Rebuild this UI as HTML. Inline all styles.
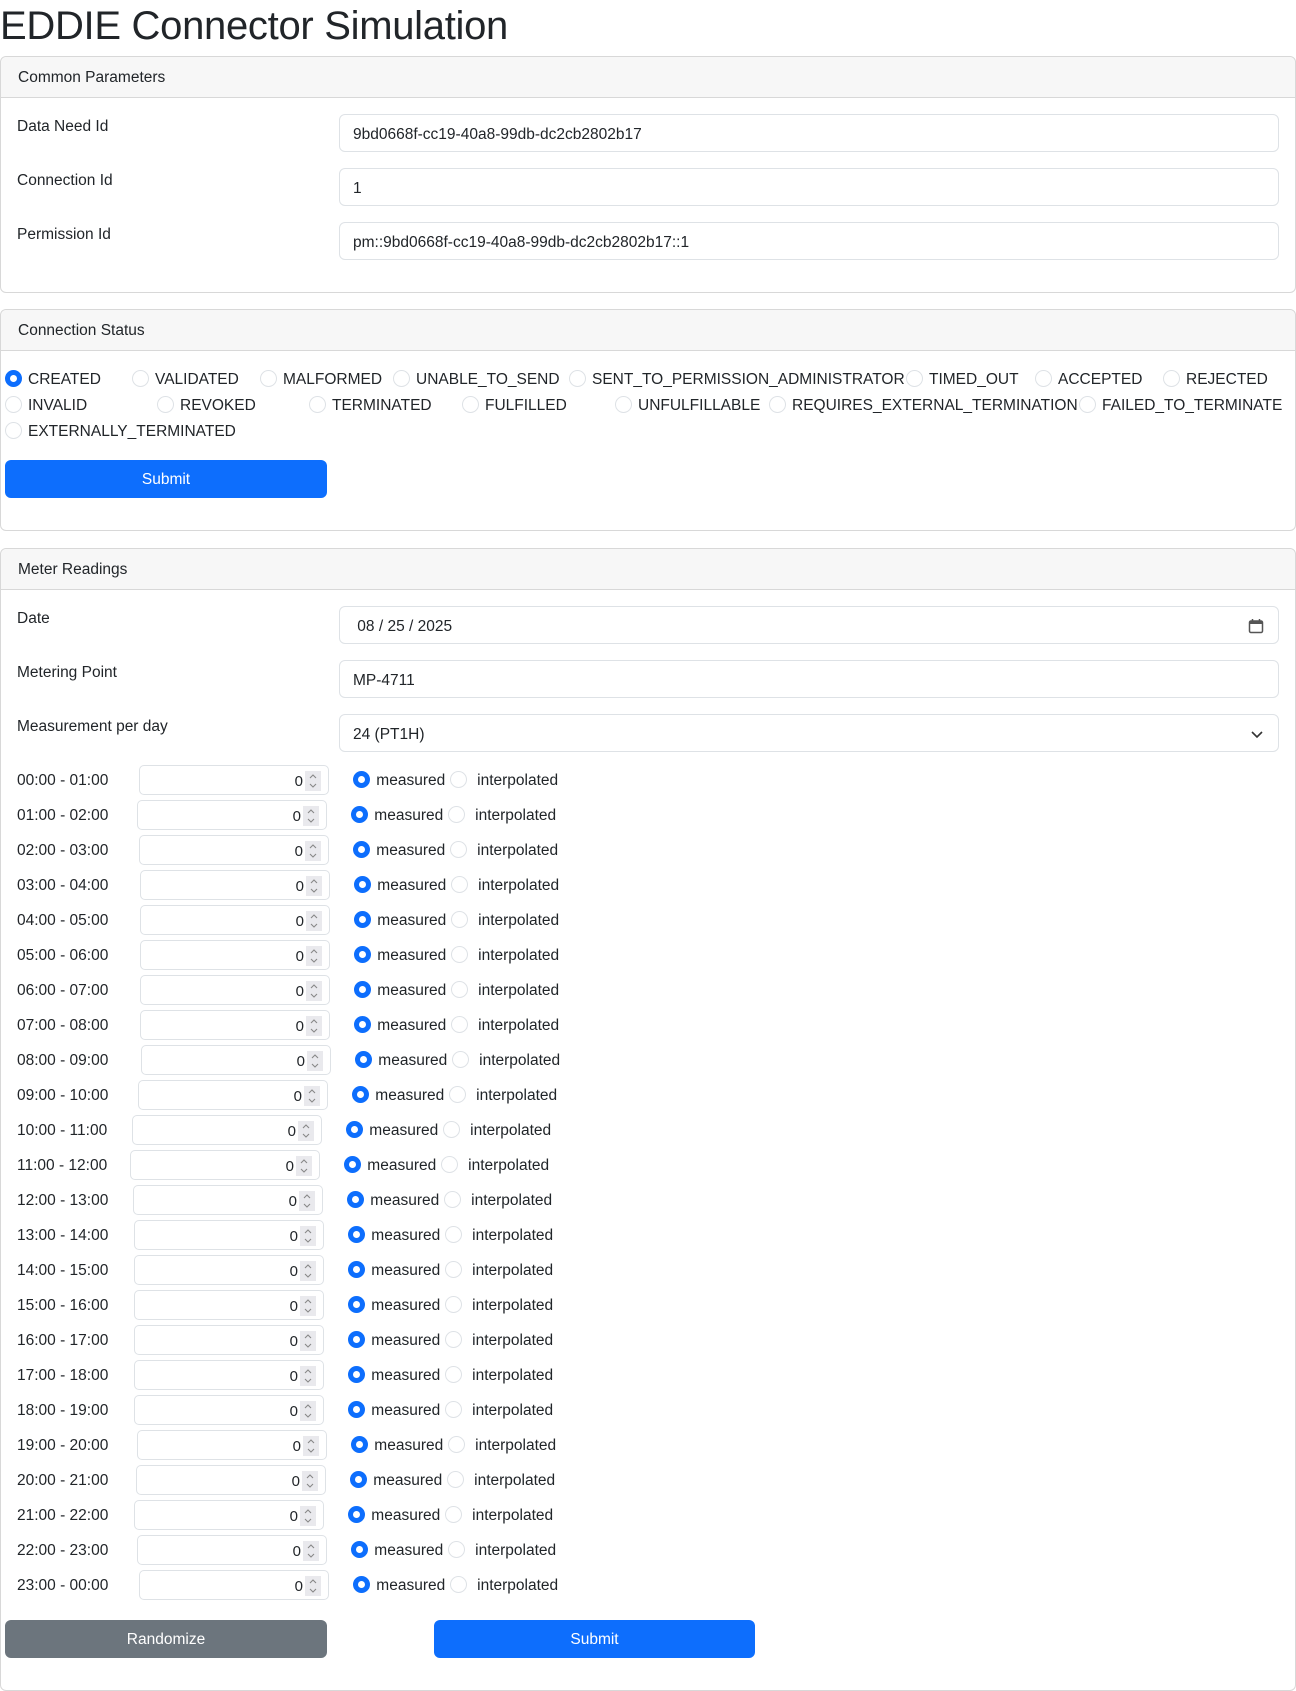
<!DOCTYPE html>
<html><head><meta charset="utf-8"><style>
*{box-sizing:border-box}
body{margin:0;width:1296px;height:1691px;font-family:"Liberation Sans",sans-serif;color:#212529;font-size:16px;position:relative;overflow:hidden;background:#fff}
.abs{position:absolute;white-space:nowrap}
h1{position:absolute;left:0;top:1px;margin:0;font-weight:400;font-size:40px;line-height:50px;letter-spacing:-0.3px}
.card{position:absolute;left:0;width:1296px;border:1px solid #d8d8d8;border-radius:6px}
.ch{height:41px;background:#f7f7f7;border-bottom:1px solid #d8d8d8;padding:0 17px;line-height:42px;font-size:15.5px;border-radius:6px 6px 0 0}
.inp{position:absolute;left:339px;width:940px;height:38px;border:1px solid #dee2e6;border-radius:6px;padding:0 13px;line-height:39px;font-size:15.5px}
.lbl{position:absolute;left:17px;font-size:15.5px}
.r{display:inline-block;width:17px;height:17px;border:1px solid #dee2e6;border-radius:50%;vertical-align:-3px;background:#fff}
.r.on{border:5px solid #0d6efd}
.btn{position:absolute;height:38px;border-radius:6px;color:#fff;text-align:center;line-height:39px;font-size:15.5px}
.row{position:absolute;left:0;width:700px;height:30px}
.row .l{position:absolute;left:17px;top:7px;font-size:15.5px}
.row .n{position:absolute;top:0;width:190px;height:30px;border:1px solid #dee2e6;border-radius:5px}
.row .n span{position:absolute;right:25px;top:7px;font-size:15px}
.row .n svg{position:absolute;right:7px;top:5px;background:#e9e9ed}
.row .m{position:absolute;top:6px;font-size:15.5px;white-space:nowrap}
.row .m .r{margin-right:2px}
.st{position:absolute;font-size:15.5px;white-space:nowrap}
.st .r{margin-right:6px}
</style></head><body>
<h1>EDDIE Connector Simulation</h1>

<div class="card" style="top:56px;height:237px">
<div class="ch">Common Parameters</div>
</div>
<div class="lbl" style="top:118px">Data Need Id</div>
<div class="inp" style="top:114px">9bd0668f-cc19-40a8-99db-dc2cb2802b17</div>
<div class="lbl" style="top:172px">Connection Id</div>
<div class="inp" style="top:168px">1</div>
<div class="lbl" style="top:226px">Permission Id</div>
<div class="inp" style="top:222px">pm::9bd0668f-cc19-40a8-99db-dc2cb2802b17::1</div>

<div class="card" style="top:309px;height:222px">
<div class="ch">Connection Status</div>
</div>
<div class="st" style="left:5px;top:370px"><span class="r on"></span>CREATED</div>
<div class="st" style="left:132px;top:370px"><span class="r"></span>VALIDATED</div>
<div class="st" style="left:260px;top:370px"><span class="r"></span>MALFORMED</div>
<div class="st" style="left:393px;top:370px"><span class="r"></span>UNABLE_TO_SEND</div>
<div class="st" style="left:569px;top:370px"><span class="r"></span>SENT_TO_PERMISSION_ADMINISTRATOR</div>
<div class="st" style="left:906px;top:370px"><span class="r"></span>TIMED_OUT</div>
<div class="st" style="left:1035px;top:370px"><span class="r"></span>ACCEPTED</div>
<div class="st" style="left:1163px;top:370px"><span class="r"></span>REJECTED</div>
<div class="st" style="left:5px;top:396px"><span class="r"></span>INVALID</div>
<div class="st" style="left:157px;top:396px"><span class="r"></span>REVOKED</div>
<div class="st" style="left:309px;top:396px"><span class="r"></span>TERMINATED</div>
<div class="st" style="left:462px;top:396px"><span class="r"></span>FULFILLED</div>
<div class="st" style="left:615px;top:396px"><span class="r"></span>UNFULFILLABLE</div>
<div class="st" style="left:769px;top:396px"><span class="r"></span>REQUIRES_EXTERNAL_TERMINATION</div>
<div class="st" style="left:1079px;top:396px"><span class="r"></span>FAILED_TO_TERMINATE</div>
<div class="st" style="left:5px;top:422px"><span class="r"></span>EXTERNALLY_TERMINATED</div>
<div class="btn" style="left:5px;top:460px;width:322px;background:#0d6efd">Submit</div>

<div class="card" style="top:548px;height:1143px">
<div class="ch">Meter Readings</div>
</div>
<div class="lbl" style="top:610px">Date</div>
<div class="inp" style="top:606px">&nbsp;08 / 25 / 2025
<svg class="abs" style="right:14px;top:11px" width="16" height="16" viewBox="0 0 16 16"><rect x="1.5" y="3" width="13" height="11.5" rx="1.5" fill="none" stroke="#555" stroke-width="1.5"/><rect x="1.5" y="3" width="13" height="3" fill="#555"/><path d="M4.5 1v3M11.5 1v3" stroke="#555" stroke-width="1.5"/></svg></div>
<div class="lbl" style="top:664px">Metering Point</div>
<div class="inp" style="top:660px">MP-4711</div>
<div class="lbl" style="top:718px">Measurement per day</div>
<div class="inp" style="top:714px">24 (PT1H)
<svg class="abs" style="right:14px;top:13px" width="14" height="12" viewBox="0 0 14 12"><path d="M2 4l5 5 5-5" fill="none" stroke="#333" stroke-width="1.6"/></svg></div>

<svg width="0" height="0" style="position:absolute"><defs><g id="sp"><path d="M5 7l3-3 3 3M5 13l3 3 3-3" fill="none" stroke="#888" stroke-width="1.1"/></g></defs></svg>

<div class="row" style="top:765px"><div class="l">00:00 - 01:00</div><div class="n" style="left:139px"><span>0</span><svg width="16" height="20"><use href="#sp"/></svg></div><div class="m" style="left:353px"><span class="r on"></span> measured <span class="r"></span>&nbsp; interpolated</div></div>
<div class="row" style="top:800px"><div class="l">01:00 - 02:00</div><div class="n" style="left:137px"><span>0</span><svg width="16" height="20"><use href="#sp"/></svg></div><div class="m" style="left:351px"><span class="r on"></span> measured <span class="r"></span>&nbsp; interpolated</div></div>
<div class="row" style="top:835px"><div class="l">02:00 - 03:00</div><div class="n" style="left:139px"><span>0</span><svg width="16" height="20"><use href="#sp"/></svg></div><div class="m" style="left:353px"><span class="r on"></span> measured <span class="r"></span>&nbsp; interpolated</div></div>
<div class="row" style="top:870px"><div class="l">03:00 - 04:00</div><div class="n" style="left:140px"><span>0</span><svg width="16" height="20"><use href="#sp"/></svg></div><div class="m" style="left:354px"><span class="r on"></span> measured <span class="r"></span>&nbsp; interpolated</div></div>
<div class="row" style="top:905px"><div class="l">04:00 - 05:00</div><div class="n" style="left:140px"><span>0</span><svg width="16" height="20"><use href="#sp"/></svg></div><div class="m" style="left:354px"><span class="r on"></span> measured <span class="r"></span>&nbsp; interpolated</div></div>
<div class="row" style="top:940px"><div class="l">05:00 - 06:00</div><div class="n" style="left:140px"><span>0</span><svg width="16" height="20"><use href="#sp"/></svg></div><div class="m" style="left:354px"><span class="r on"></span> measured <span class="r"></span>&nbsp; interpolated</div></div>
<div class="row" style="top:975px"><div class="l">06:00 - 07:00</div><div class="n" style="left:140px"><span>0</span><svg width="16" height="20"><use href="#sp"/></svg></div><div class="m" style="left:354px"><span class="r on"></span> measured <span class="r"></span>&nbsp; interpolated</div></div>
<div class="row" style="top:1010px"><div class="l">07:00 - 08:00</div><div class="n" style="left:140px"><span>0</span><svg width="16" height="20"><use href="#sp"/></svg></div><div class="m" style="left:354px"><span class="r on"></span> measured <span class="r"></span>&nbsp; interpolated</div></div>
<div class="row" style="top:1045px"><div class="l">08:00 - 09:00</div><div class="n" style="left:141px"><span>0</span><svg width="16" height="20"><use href="#sp"/></svg></div><div class="m" style="left:355px"><span class="r on"></span> measured <span class="r"></span>&nbsp; interpolated</div></div>
<div class="row" style="top:1080px"><div class="l">09:00 - 10:00</div><div class="n" style="left:138px"><span>0</span><svg width="16" height="20"><use href="#sp"/></svg></div><div class="m" style="left:352px"><span class="r on"></span> measured <span class="r"></span>&nbsp; interpolated</div></div>
<div class="row" style="top:1115px"><div class="l">10:00 - 11:00</div><div class="n" style="left:132px"><span>0</span><svg width="16" height="20"><use href="#sp"/></svg></div><div class="m" style="left:346px"><span class="r on"></span> measured <span class="r"></span>&nbsp; interpolated</div></div>
<div class="row" style="top:1150px"><div class="l">11:00 - 12:00</div><div class="n" style="left:130px"><span>0</span><svg width="16" height="20"><use href="#sp"/></svg></div><div class="m" style="left:344px"><span class="r on"></span> measured <span class="r"></span>&nbsp; interpolated</div></div>
<div class="row" style="top:1185px"><div class="l">12:00 - 13:00</div><div class="n" style="left:133px"><span>0</span><svg width="16" height="20"><use href="#sp"/></svg></div><div class="m" style="left:347px"><span class="r on"></span> measured <span class="r"></span>&nbsp; interpolated</div></div>
<div class="row" style="top:1220px"><div class="l">13:00 - 14:00</div><div class="n" style="left:134px"><span>0</span><svg width="16" height="20"><use href="#sp"/></svg></div><div class="m" style="left:348px"><span class="r on"></span> measured <span class="r"></span>&nbsp; interpolated</div></div>
<div class="row" style="top:1255px"><div class="l">14:00 - 15:00</div><div class="n" style="left:134px"><span>0</span><svg width="16" height="20"><use href="#sp"/></svg></div><div class="m" style="left:348px"><span class="r on"></span> measured <span class="r"></span>&nbsp; interpolated</div></div>
<div class="row" style="top:1290px"><div class="l">15:00 - 16:00</div><div class="n" style="left:134px"><span>0</span><svg width="16" height="20"><use href="#sp"/></svg></div><div class="m" style="left:348px"><span class="r on"></span> measured <span class="r"></span>&nbsp; interpolated</div></div>
<div class="row" style="top:1325px"><div class="l">16:00 - 17:00</div><div class="n" style="left:134px"><span>0</span><svg width="16" height="20"><use href="#sp"/></svg></div><div class="m" style="left:348px"><span class="r on"></span> measured <span class="r"></span>&nbsp; interpolated</div></div>
<div class="row" style="top:1360px"><div class="l">17:00 - 18:00</div><div class="n" style="left:134px"><span>0</span><svg width="16" height="20"><use href="#sp"/></svg></div><div class="m" style="left:348px"><span class="r on"></span> measured <span class="r"></span>&nbsp; interpolated</div></div>
<div class="row" style="top:1395px"><div class="l">18:00 - 19:00</div><div class="n" style="left:134px"><span>0</span><svg width="16" height="20"><use href="#sp"/></svg></div><div class="m" style="left:348px"><span class="r on"></span> measured <span class="r"></span>&nbsp; interpolated</div></div>
<div class="row" style="top:1430px"><div class="l">19:00 - 20:00</div><div class="n" style="left:137px"><span>0</span><svg width="16" height="20"><use href="#sp"/></svg></div><div class="m" style="left:351px"><span class="r on"></span> measured <span class="r"></span>&nbsp; interpolated</div></div>
<div class="row" style="top:1465px"><div class="l">20:00 - 21:00</div><div class="n" style="left:136px"><span>0</span><svg width="16" height="20"><use href="#sp"/></svg></div><div class="m" style="left:350px"><span class="r on"></span> measured <span class="r"></span>&nbsp; interpolated</div></div>
<div class="row" style="top:1500px"><div class="l">21:00 - 22:00</div><div class="n" style="left:134px"><span>0</span><svg width="16" height="20"><use href="#sp"/></svg></div><div class="m" style="left:348px"><span class="r on"></span> measured <span class="r"></span>&nbsp; interpolated</div></div>
<div class="row" style="top:1535px"><div class="l">22:00 - 23:00</div><div class="n" style="left:137px"><span>0</span><svg width="16" height="20"><use href="#sp"/></svg></div><div class="m" style="left:351px"><span class="r on"></span> measured <span class="r"></span>&nbsp; interpolated</div></div>
<div class="row" style="top:1570px"><div class="l">23:00 - 00:00</div><div class="n" style="left:139px"><span>0</span><svg width="16" height="20"><use href="#sp"/></svg></div><div class="m" style="left:353px"><span class="r on"></span> measured <span class="r"></span>&nbsp; interpolated</div></div>

<div class="btn" style="left:5px;top:1620px;width:322px;background:#6c757d">Randomize</div>
<div class="btn" style="left:434px;top:1620px;width:321px;background:#0d6efd">Submit</div>
</body></html>
